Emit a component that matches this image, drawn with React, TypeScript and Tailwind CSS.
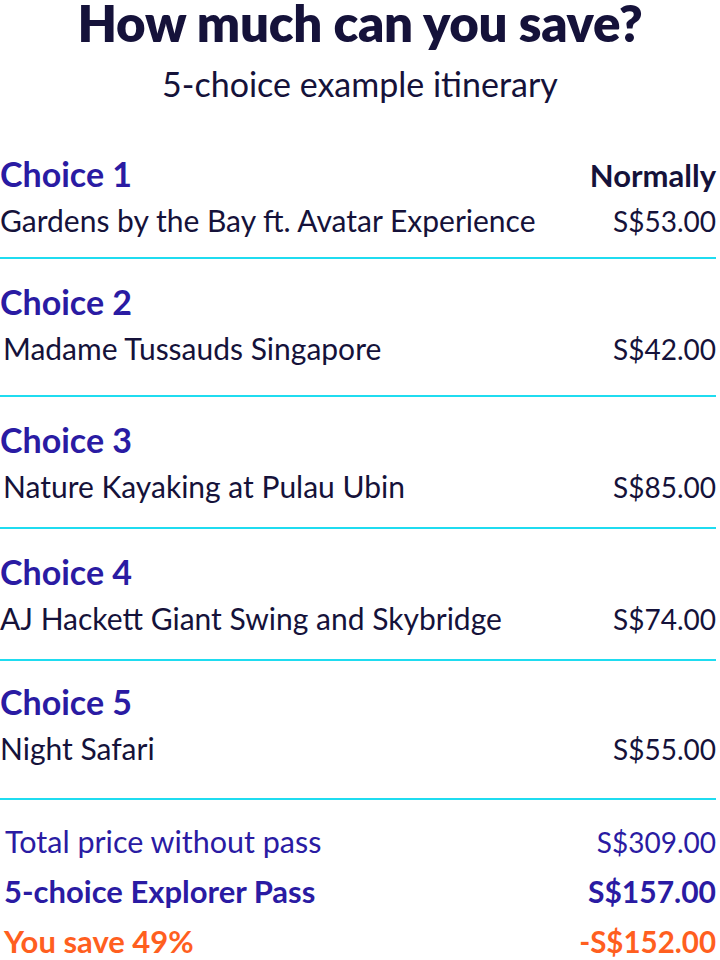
const choices = [
  { n: 1, name: "Gardens by the Bay ft. Avatar Experience", price: "S$53.00", pad: "pt-0 pb-[11px]", indent: "" },
  { n: 2, name: "Madame Tussauds Singapore", price: "S$42.00", pad: "pt-[23px] pb-[21px]", indent: "pl-[3px]" },
  { n: 3, name: "Nature Kayaking at Pulau Ubin", price: "S$85.00", pad: "pt-[23px] pb-[15px]", indent: "pl-[3px]" },
  { n: 4, name: "AJ Hackett Giant Swing and Skybridge", price: "S$74.00", pad: "pt-[23px] pb-[15px]", indent: "" },
  { n: 5, name: "Night Safari", price: "S$55.00", pad: "pt-[21px] pb-[24px]", indent: "" },
];

export default function App() {
  return (
    <main className="w-[720px] h-[960px] bg-white overflow-hidden font-['Lato',sans-serif] text-[#15123a]">
      {/* heading */}
      <header className="text-center pt-[3px]">
        <h1 className="text-[51px] leading-[40px] font-extrabold tracking-[-0.3px]">How much can you save?</h1>
        <p className="mt-[21px] text-[34px] leading-[40px]">5-choice example itinerary</p>
      </header>

      <section className="mt-[50px] pr-[4px]">
        {choices.map((c) => (
          <div key={c.n} className={`border-b-2 border-[#1fdcf0] ${c.pad}`}>
            <div className="flex items-baseline justify-between h-[40px]">
              <h2 className="text-[34px] leading-[40px] font-bold text-[#2a1ba3]">Choice {c.n}</h2>
              {c.n === 1 && <span className="text-[31px] leading-[40px] font-bold">Normally</span>}
            </div>
            <div className="flex items-baseline justify-between h-[52px] leading-[52px]">
              <span className={`text-[30px] ${c.indent}`}>{c.name}</span>
              <span className="text-[28px]">{c.price}</span>
            </div>
          </div>
        ))}

        {/* totals */}
        <div className="pt-[16px]">
          <div className="flex justify-between items-baseline h-[50px] leading-[50px] text-[#2a1ba3] pl-[5px]">
            <span className="text-[30.5px]">Total price without pass</span>
            <span className="text-[28px]">S$309.00</span>
          </div>
          <div className="flex justify-between items-baseline h-[50px] leading-[50px] font-bold text-[#2a1ba3] pl-[4px]">
            <span className="text-[31px]">5-choice Explorer Pass</span>
            <span className="text-[30px]">S$157.00</span>
          </div>
          <div className="flex justify-between items-baseline h-[50px] leading-[50px] font-bold text-[#ff5f1f] pl-[4px]">
            <span className="text-[31px]">You save 49%</span>
            <span className="text-[29.5px]">-S$152.00</span>
          </div>
        </div>
      </section>
    </main>
  );
}
